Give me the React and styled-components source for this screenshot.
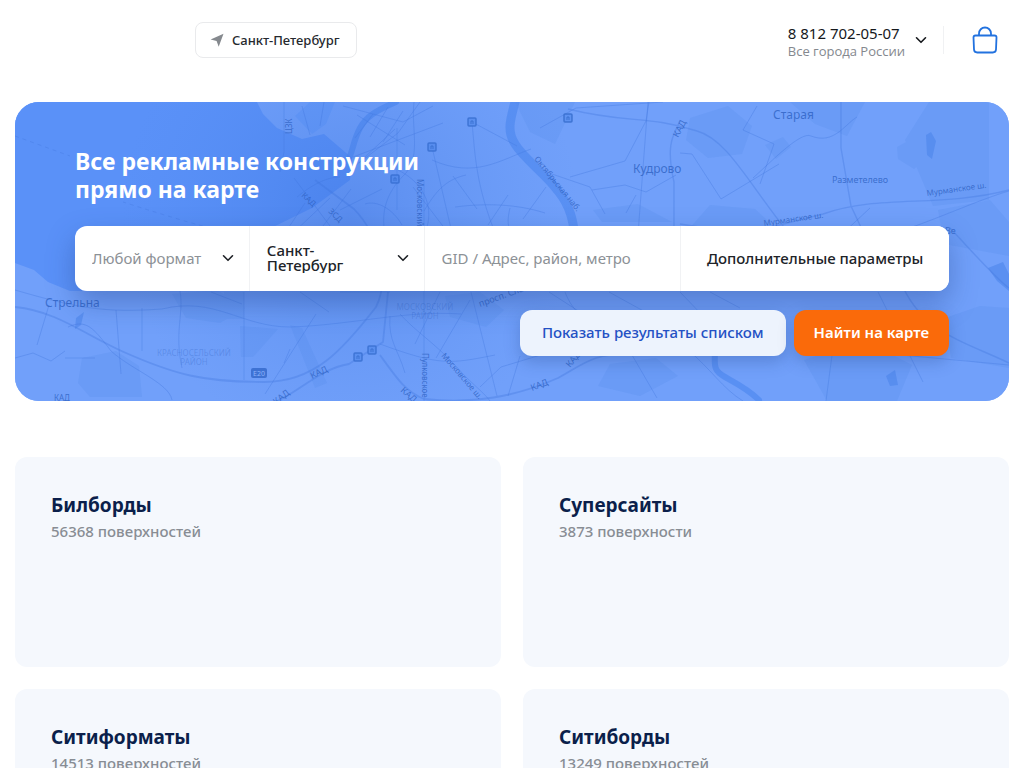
import React from "react";
import styled, { createGlobalStyle } from "styled-components";

const GlobalStyle = createGlobalStyle`
  *, *::before, *::after { box-sizing: border-box; }
  body {
    margin: 0;
    background: #fff;
    color: #1d2025;
    font-family: "Noto Sans", sans-serif;
    font-size: 15px;
    overflow-x: hidden;
  }
  button, input, select { font-family: inherit; margin: 0; }
  h1, h2, p { margin: 0; }
`;

const Page = styled.div`
  padding: 0 15px;
`;

const Header = styled.header`
  display: flex;
  align-items: center;
  justify-content: space-between;
  height: 80px;
  padding: 0 11px 0 180px;
  margin-bottom: 22px;
`;

const CityButton = styled.button`
  display: flex;
  align-items: center;
  gap: 8px;
  height: 36px;
  padding: 0 16px 0 14px;
  border: 1px solid #e9eaec;
  border-radius: 8px;
  background: #fff;
  color: #26292e;
  font-size: 13px;
  font-weight: 500;
`;

const HeaderRight = styled.div`
  display: flex;
  align-items: center;
`;

const Contacts = styled.div`
  display: flex;
  flex-direction: column;
  padding-top: 4px;
`;

const Phone = styled.a`
  color: #15181c;
  font-size: 15px;
  line-height: 18px;
  text-decoration: none;
`;

const Region = styled.span`
  color: #84888e;
  font-family: "Open Sans", sans-serif;
  font-size: 13px;
  line-height: 18px;
`;

const IconButton = styled.button`
  display: flex;
  padding: 0;
  border: 0;
  background: none;
  color: #15181c;
`;

const MoreButton = styled(IconButton)`
  margin-left: 10px;
`;

const CartArea = styled.div`
  display: flex;
  align-items: center;
  height: 28px;
  margin-left: 16px;
  padding-left: 28px;
  border-left: 1px solid #f0f1f3;
`;

const Hero = styled.section`
  position: relative;
  overflow: hidden;
  min-height: 299px;
  padding: 45px 60px;
  border-radius: 24px;
  background: #6f9ff9;
`;

const MapLayer = styled.svg`
  position: absolute;
  inset: 0;
  width: 100%;
  height: 100%;
`;

const HeroContent = styled.div`
  position: relative;
`;

const HeroTitle = styled.h1`
  color: #fff;
  font-size: 23px;
  font-weight: 700;
  line-height: 28px;
`;

const SearchForm = styled.form`
  margin-top: 23px;
`;

const SearchBar = styled.div`
  display: grid;
  grid-template-columns: 175fr 175fr 257fr 268fr;
  height: 65px;
  overflow: hidden;
  border-radius: 12px;
  background: #fff;
`;

const SearchShadow = styled.div`
  border-radius: 12px;
  box-shadow: 0 12px 28px rgba(30, 60, 130, 0.36);
`;

const Cell = styled.div`
  position: relative;
  display: flex;
  align-items: center;
  min-width: 0;
  padding-bottom: 2px;
  border-right: 1px solid #f1f2f4;
`;

const Select = styled.select`
  appearance: none;
  width: 100%;
  padding: 4px 40px 4px 17px;
  border: 0;
  background: transparent;
  color: ${(p) => (p.$muted ? "#8c9196" : "#202328")};
  font-size: 15px;
  font-weight: ${(p) => (p.$muted ? 400 : 500)};
  line-height: ${(p) => (p.$muted ? 22 : 15)}px;
  white-space: ${(p) => (p.$muted ? "nowrap" : "normal")};
`;

const SelectArrow = styled.span`
  position: absolute;
  right: 15px;
  display: flex;
  pointer-events: none;
`;

const SearchInput = styled.input`
  width: 100%;
  height: 100%;
  padding: 0 17px;
  border: 0;
  background: transparent;
  font-size: 15px;
  &::placeholder { color: #8c9196; opacity: 1; }
`;

const ParamsButton = styled.button`
  padding: 0 0 2px;
  border: 0;
  background: #fff;
  color: #202328;
  font-size: 15px;
  font-weight: 500;
`;

const Actions = styled.div`
  display: flex;
  justify-content: flex-end;
  gap: 8px;
  margin-top: 19px;
`;

const ActionButton = styled.button`
  height: 46px;
  padding: 0 ${(p) => (p.$primary ? 20 : 22)}px 2px;
  border: 0;
  border-radius: 12px;
  background: ${(p) => (p.$primary ? "#fa6a0a" : "#edf3fd")};
  color: ${(p) => (p.$primary ? "#fff" : "#2451c4")};
  font-size: 15px;
  font-weight: ${(p) => (p.$primary ? 600 : 500)};
  box-shadow: 0 6px 16px rgba(30, 60, 130, 0.28);
`;

const Cards = styled.main`
  display: grid;
  grid-template-columns: 1fr 1fr;
  gap: 22px;
  margin-top: 56px;
  padding-bottom: 22px;
`;

const Card = styled.a`
  display: block;
  min-height: 210px;
  padding: 36px;
  border-radius: 12px;
  background: #f5f8fd;
  text-decoration: none;
`;

const CardTitle = styled.h2`
  color: #0b1f4b;
  font-size: 19px;
  font-weight: 700;
  line-height: 24px;
`;

const CardCount = styled.p`
  margin-top: 3px;
  color: #888d94;
  font-size: 15px;
  font-weight: 500;
  line-height: 22px;
`;

const MapLabel = styled.text`
  fill: #2f63c4;
  fill-opacity: ${(p) => (p.$faint ? 0.32 : 0.82)};
  font-size: ${(p) => p.$size || 9}px;
`;

const Chevron = () => (
  <svg width="12" height="12" viewBox="0 0 12 12" fill="none" stroke="currentColor" strokeWidth="1.6" strokeLinecap="round" strokeLinejoin="round" aria-hidden="true">
    <path d="M1.5 3.8 6 8.3l4.500-4.500" />
  </svg>
);

const LocationArrow = () => (
  <svg width="14" height="14" viewBox="0 0 14 14" fill="#85898e" aria-hidden="true">
    <path d="M13.500.800.600 6.400l6 1.500 2.100 5.800z" />
  </svg>
);

const Bag = () => (
  <svg width="26" height="28" viewBox="0 0 26 28" fill="none" stroke="#2272df" strokeWidth="1.800" strokeLinecap="round" strokeLinejoin="round" aria-hidden="true">
    <path d="M3.500 9.500h19q2.100 0 2 2l-.500 12q-.200 3-3.200 3H5.200q-3 0-3.200-3l-.500-12q0-2 2-2z" />
    <path d="M7 9V7.500a6 6 0 0 1 12 0V9" />
  </svg>
);

const metroStations = [[472, 122], [568, 118], [432, 147], [395, 179], [358, 357], [372, 350]];

const CityMap = () => (
  <MapLayer viewBox="15 102 994 299" preserveAspectRatio="xMidYMid slice" aria-hidden="true">
    <defs>
      <radialGradient id="shade" gradientUnits="userSpaceOnUse" cx="350" cy="215" r="230">
        <stop offset="0" stopColor="#2f69d8" stopOpacity=".36" />
        <stop offset=".5" stopColor="#3c76e0" stopOpacity=".18" />
        <stop offset="1" stopColor="#4a83ea" stopOpacity="0" />
      </radialGradient>
    </defs>
    <rect x="15" y="102" width="994" height="299" fill="#71a0fa" />
    <path d="M15 102H257l6 12 14 14 25 11 22-5 28 24-2 22-38 28-45 22-10 35-60 26H70L48 282l-14-12-19-7z" fill="#5a91f8" />
    <path d="M310 102h25l-9 22-14 10-17-18z" fill="#669af9" />
    <g fill="#5e94ee" fillOpacity=".38">
      <path d="m690 118 38-12 24 20-10 28-34 4-22-18zM710 205l45 4 23 21H688zM790 102h75l-18 34-32-12zM905 140l24-38h60v98l-56 6zM897 147l20-11 12 18-15 15-16-10zM938 210l52-10 19 22v34l-65-12z" />
      <path d="m82 358 34-7 23 15 3 31H90l-12-14zM172 294l45-4 28 18-25 15-34-5zM240 326l38 3-25 28h-12zM224 292h20v27h-20zM290 325l12 3 25 55-12 5zM945 318l35-12 29 2v60l-58-10zM515 102h60l-20 42-25-12z" />
      <path d="m445 296 35-4 24 18-18 17-36-10zM610 364l46-6 22 18-38 20-42-10zM804 360l60-20 48 25-15 36h-70zM765 145l18-8 8 10-15 12zM593 210l45-6 34 18h-70z" />
    </g>
    <g fill="none" stroke="#5089f0" strokeLinecap="round" strokeLinejoin="round" strokeOpacity=".7">
      <path d="M396 102c-21 9-30 15-36 26s-7 21-10 28" strokeWidth="6" />
      <path d="M515 102c-4 16-9 28 0 42 9 15 30 29 43 47 13 16 15 31 17 45" strokeWidth="9" />
      <path d="M715 350c0 14-3 20 10 27 9 5 23 12 34 23" strokeWidth="6" />
    </g>
    <path d="m988 268 15-6 6 12v17l-12-10zM886 376l9-6 3 15-8 1zM76 318l8-6-3 13-6 4zM926 135l5-3 5 9-4 18-5-4z" fill="#4d85eb" fillOpacity=".6" />
    <g fill="none" stroke="#447ae0" strokeOpacity=".38" strokeWidth="1" strokeLinejoin="round">
      <path strokeWidth="1.800" d="M15 307c42 4 70 28 111 46 50 22 78 29 138 29 50 0 78-31 112-75 13-25 5-70-22-98l-39-29" />
      <path d="M15 290c62 18 88 23 147 19 53-13 79 18 128 18 62-2 116-17 171-13M116 310l5 64M142 308v43M180 291c4 23-6 41 2 77M244 292v88M68 327c18-8 25 0 43 24 21 19 58 32 61 49M15 358l18-5 18 8 14-10M65 358h30M49 305l-12 40M316 314l-51 80M290 349l-6 14M211 292l31 12M300 292l29 20M390 292h-50" />
      <path strokeWidth="1.800" d="M388 292l-5 50-34 22c-28 4-53 30-72 37M380 355c18 25 26 37 44 44 50 5 91-2 134-21 23-12 35-26 74-24" />
      <path d="M414 102c-3 27 7 52-8 71-23 22-23 42-22 54M397 210v-82M424 181v220M471 292l26 104M400 314c18 20 36 29 63 60 14 14 22 20 27 27M390 316c-2 25 8 33 15 57M380 344c60 22 70 20 115 11M480 387l21-20 66-20M549 292l34 22M565 292c16 42 64 48 87 22" />
      <path d="M472 122c3 33 4 64 24 113M472 122l45 24M432 147l20 86M432 160c43 19 68 0 99-11M540 128l36-20 87-6M343 106l60 16 30-16M357 115l48 30M420 102l-22 31-39 30M353 157l90-34M398 170c30 15 35 41 28 60M413 187l36 47M455 207c39-5 68-1 90 6M488 225l20-30M570 177l55-16 21-40 3-19M648 102l-10 132M605 214l-15-27-41-14M592 190l33-5 21 7 30-17M626 213l10-18" />
      <path strokeWidth="1.400" d="M680 120c-3 12-16 18-6 62v44M568 109c60 15 80 6 129 22 30 8 52 53 90 100M680 224l64 10 79-20c56-20 117-6 186-24M841 102v46l10 58 14 30M950 228c20 21 44 49 59 60M900 280c20 52 63 61 109 83" />
      <path d="M753 178c20-18 48-47 58-42 23 9 34-12 46-19M680 153l12 1 29 45 58-35M757 106l-14 24 31 14-14 40M840 236l30-28M904 230c43-15 77-31 105-39M878 292l45 90M820 314l60 39 129 12M680 292l50 52M710 292l30 16M609 292l78 43" />
      <path strokeDasharray="4 4" d="M15 136l55 20M226 232c-30-7-75-21-103-30" />
      <path d="M340 177c-15 0-31 10-43 20M324 102l-4 24M284 102v50l-4 20M302 106l8 29M294 178l36 48M351 189l-34 45M305 203l-20 30M330 198l-38 36M688 350c22 18 35 39 55 51M832 355l-6 46M632 355l25 43" />
      <path d="M355 138l18-24M370 137l18-30M383 142l20-31M350 171l45-42M340 210l42-21M402 225c-9-16-25-25-37-21M424 211c14-24 25-32 42-36M453 176l24 33M510 208c-5 20 0 28 15 31M546 187l-23 32M470 300l-34 58M440 292l-25 52M520 356l-12 40" />
    </g>
    <g fill="#5d92f1" stroke="#356ccc" strokeOpacity=".8" strokeWidth="1.500">
      {metroStations.map(([x, y]) => (
        <g key={`${x}-${y}`}>
          <rect x={x - 4} y={y - 4} width="8" height="8" rx="1" />
          <path d={`M${x - 1} ${y + 2}v-3h2v3`} strokeWidth="1" />
        </g>
      ))}
    </g>
    <rect x="15" y="102" width="600" height="299" fill="url(#shade)" />
    <MapLabel x="773" y="119" $size={12}>Старая</MapLabel>
    <MapLabel x="633" y="173" $size={12}>Кудрово</MapLabel>
    <MapLabel x="832" y="183" $size={9}>Разметелево</MapLabel>
    <MapLabel x="45" y="307" $size={12}>Стрельна</MapLabel>
    <MapLabel x="945" y="234">Ве</MapLabel>
    <MapLabel transform="translate(927 196) rotate(-8)" $size={8}>Мурманское ш.</MapLabel>
    <MapLabel transform="translate(764 226) rotate(-8)" $size={8}>Мурманское ш.</MapLabel>
    <MapLabel transform="translate(678 138) rotate(-62)">КАД</MapLabel>
    <MapLabel transform="translate(534 159) rotate(51)" $size={8}>Октябрьская наб.</MapLabel>
    <MapLabel transform="translate(417 179) rotate(90)" $size={8}>Московский</MapLabel>
    <MapLabel transform="translate(480 307) rotate(-20)">просп. Славы</MapLabel>
    <MapLabel transform="translate(422 353) rotate(90)" $size={8}>Пулковское</MapLabel>
    <MapLabel transform="translate(441 356) rotate(49)" $size={8}>Московское ш.</MapLabel>
    <MapLabel transform="translate(532 391) rotate(-21)">КАД</MapLabel>
    <MapLabel transform="translate(570 368) rotate(-50)">КАД</MapLabel>
    <MapLabel transform="translate(400 391) rotate(42)">КАД</MapLabel>
    <MapLabel transform="translate(312 379) rotate(-25)">КАД</MapLabel>
    <MapLabel transform="translate(276 405) rotate(-38)">КАД</MapLabel>
    <MapLabel x="54" y="401" $size={8}>КАД</MapLabel>
    <MapLabel transform="translate(301 196) rotate(43)" $size={8}>КАД</MapLabel>
    <MapLabel transform="translate(328 212) rotate(43)" $size={8}>ЗСД</MapLabel>
    <MapLabel transform="translate(292 134) rotate(-90)" $size={8}>ЦЗК</MapLabel>
    <MapLabel x="194" y="356" textAnchor="middle" $faint $size={8}>КРАСНОСЕЛЬСКИЙ</MapLabel>
    <MapLabel x="194" y="365" textAnchor="middle" $faint $size={8}>РАЙОН</MapLabel>
    <MapLabel x="425" y="310" textAnchor="middle" $faint $size={8}>МОСКОВСКИЙ</MapLabel>
    <MapLabel x="425" y="319" textAnchor="middle" $faint $size={8}>РАЙОН</MapLabel>
    <rect x="251" y="368" width="16" height="10" rx="2" fill="#3e72d3" />
    <text x="259" y="376" textAnchor="middle" fontSize="7" fill="#8db3fc">E20</text>
  </MapLayer>
);

const categories = [
  { title: "Билборды", count: "56368 поверхностей" },
  { title: "Суперсайты", count: "3873 поверхности" },
  { title: "Ситиформаты", count: "14513 поверхностей" },
  { title: "Ситиборды", count: "13249 поверхностей" },
];

export default function App() {
  return (
    <>
      <GlobalStyle />
      <Page>
        <Header>
          <CityButton type="button">
            <LocationArrow />
            Санкт-Петербург
          </CityButton>
          <HeaderRight>
            <Contacts>
              <Phone href="tel:88127020507">8 812 702-05-07</Phone>
              <Region>Все города России</Region>
            </Contacts>
            <MoreButton type="button" aria-label="Телефоны">
              <Chevron />
            </MoreButton>
            <CartArea>
              <IconButton type="button" aria-label="Корзина">
                <Bag />
              </IconButton>
            </CartArea>
          </HeaderRight>
        </Header>

        <Hero>
          <CityMap />
          <HeroContent>
            <HeroTitle>
              Все рекламные конструкции
              <br />
              прямо на карте
            </HeroTitle>
            <SearchForm onSubmit={(e) => e.preventDefault()}>
              <SearchShadow>
                <SearchBar>
                  <Cell>
                    <Select $muted aria-label="Формат">
                      <option>Любой формат</option>
                    </Select>
                    <SelectArrow><Chevron /></SelectArrow>
                  </Cell>
                  <Cell>
                    <Select aria-label="Город">
                      <option>Санкт-Петербург</option>
                    </Select>
                    <SelectArrow><Chevron /></SelectArrow>
                  </Cell>
                  <Cell>
                    <SearchInput type="text" aria-label="Адрес" placeholder="GID / Адрес, район, метро" />
                  </Cell>
                  <ParamsButton type="button">Дополнительные параметры</ParamsButton>
                </SearchBar>
              </SearchShadow>
              <Actions>
                <ActionButton type="button">Показать результаты списком</ActionButton>
                <ActionButton type="submit" $primary>Найти на карте</ActionButton>
              </Actions>
            </SearchForm>
          </HeroContent>
        </Hero>

        <Cards>
          {categories.map(({ title, count }) => (
            <Card href="#" key={title}>
              <CardTitle>{title}</CardTitle>
              <CardCount>{count}</CardCount>
            </Card>
          ))}
        </Cards>
      </Page>
    </>
  );
}
